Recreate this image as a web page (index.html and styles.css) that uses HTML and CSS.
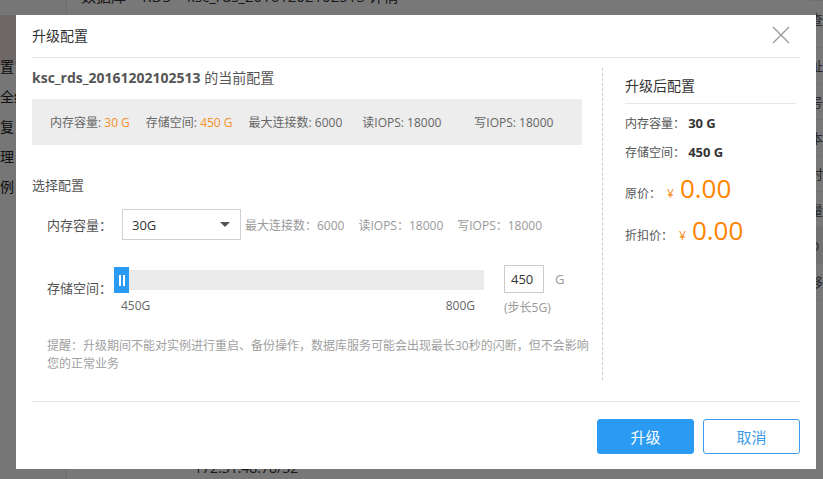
FILE: index.html
```html
<!DOCTYPE html>
<html lang="zh-CN">
<head>
  <meta charset="UTF-8" />
  <meta name="viewport" content="width=device-width, initial-scale=1.0"/>
  <title>升级配置</title>
  <link rel="stylesheet" href="styles.css">
</head>
<body>

  <!-- page behind the dialog -->
  <div class="page">
    <aside class="sidebar">
      <div class="side-head"></div>
      <ul class="side-menu">
        <li>置</li>
        <li>全终</li>
        <li>复</li>
        <li>理</li>
        <li>例</li>
      </ul>
    </aside>
    <main class="main">
      <div class="crumb">数据库 &gt; RDS &gt; ksc_rds_20161202102513 详情</div>
      <div class="content">
        <div class="content-left">
          <div class="ip">172.31.48.78/32</div>
        </div>
        <ul class="content-right">
          <li class="line">查</li>
          <li>址</li>
          <li>号</li>
          <li>本</li>
          <li>时</li>
          <li>量</li>
          <li class="band">D</li>
          <li>移</li>
        </ul>
      </div>
    </main>
  </div>

  <div class="mask"></div>

  <!-- upgrade dialog -->
  <div class="modal">
    <div class="modal-header">
      <span class="modal-title">升级配置</span>
      <svg class="close" width="18" height="18" viewBox="0 0 18 18">
        <path d="M1 1 L17 17 M17 1 L1 17" stroke="#9a9a9a" stroke-width="1.3" fill="none"/>
      </svg>
    </div>

    <div class="modal-body">
      <div class="col-left">
        <div class="cur-title"><b>ksc_rds_20161202102513</b> 的当前配置</div>
        <div class="cur-box">
          <span class="cur-item">内存容量: <em>30 G</em></span>
          <span class="cur-item">存储空间: <em>450 G</em></span>
          <span class="cur-item conn">最大连接数: 6000</span>
          <span class="cur-item wide">读IOPS: 18000</span>
          <span class="cur-item">写IOPS: 18000</span>
        </div>

        <div class="sub-title">选择配置</div>

        <div class="form-row">
          <label class="label mem-label">内存容量：</label>
          <div class="select">
            <span>30G</span>
            <span class="caret"></span>
          </div>
          <span class="spec">最大连接数：6000</span>
          <span class="spec">读IOPS：18000</span>
          <span class="spec">写IOPS：18000</span>
        </div>

        <div class="form-row disk-row">
          <label class="label disk-label">存储空间：</label>
          <div class="slider-wrap">
            <div class="slider">
              <div class="handle"><i></i><i></i></div>
            </div>
            <div class="scale">
              <span>450G</span>
              <span>800G</span>
            </div>
          </div>
          <div class="size-wrap">
            <div class="size-input">
              <input type="text" value="450">
              <span class="unit">G</span>
            </div>
            <div class="step">(步长5G)</div>
          </div>
        </div>

        <p class="notice">提醒：升级期间不能对实例进行重启、备份操作，数据库服务可能会出现最长30秒的闪断，但不会影响您的正常业务</p>
      </div>

      <div class="col-right">
        <div class="after-title">升级后配置</div>
        <div class="after-row">内存容量： <b>30 G</b></div>
        <div class="after-row">存储空间： <b>450 G</b></div>
        <div class="price-row">原价：<span class="yen">¥</span><span class="price">0.00</span></div>
        <div class="price-row discount">折扣价：<span class="yen">¥</span><span class="price">0.00</span></div>
      </div>
    </div>

    <div class="modal-footer">
      <button class="btn btn-primary">升级</button>
      <button class="btn btn-default">取消</button>
    </div>
  </div>

</body>
</html>
```

FILE: styles.css
```css
* {
  box-sizing: border-box;
}
body {
  margin: 0;
  width: 823px;
  height: 479px;
  overflow: hidden;
  font-family: 'Open Sans', 'Noto Sans CJK SC', sans-serif;
  color: #555;
  background: #fff;
}
ul {
  list-style: none;
  margin: 0;
  padding: 0;
}

/* background page */
.page {
  display: flex;
  height: 479px;
}
.sidebar {
  width: 73px;
  background: #fafafa;
  border-right: 1px solid #e8e8e8;
}
.side-head {
  height: 50px;
  margin-top: 15px;
  background: #e9dcdc;
}
.side-menu li {
  height: 30px;
  line-height: 30px;
  font-size: 14px;
  color: #222;
}
.side-menu li:first-child {
  margin-top: -13px;
}
.main {
  flex: 1;
  background: #fff;
}
.crumb {
  margin: -14px 0 0 14px;
  height: 29px;
  line-height: 20px;
  font-size: 15px;
  color: #333;
}
.content {
  display: flex;
}
.content-left {
  width: 743px;
  height: 455px;
  display: flex;
  align-items: flex-end;
}
.ip {
  margin: 0 0 -7px 127px;
  font-size: 14px;
  color: #333;
}
.content-right {
  flex: 1;
  margin-top: -15px;
}
.content-right li {
  height: 36px;
  line-height: 36px;
  font-size: 13px;
  color: #555;
  border-bottom: 1px solid #f0f0f0;
}
.content-right li.line {
  height: 48px;
  border-top: 1px solid #eee;
}
.content-right li.band {
  background: #f1f1f1;
}

.mask {
  position: fixed;
  top: 0; left: 0; right: 0; bottom: 0;
  background: rgba(0,0,0,0.53);
}

/* dialog */
.modal {
  position: fixed;
  left: 16px;
  top: 15px;
  width: 800px;
  height: 454px;
  background: #fff;
  padding: 0 16px;
}
.modal-header {
  height: 43px;
  border-bottom: 1px solid #e8e8e8;
  display: flex;
  align-items: center;
  justify-content: space-between;
}
.modal-title {
  font-size: 14px;
  color: #333;
  margin-top: -2px;
}
.close {
  margin: -2px 10px 0 0;
}
.modal-body {
  display: flex;
  height: 344px;
  border-bottom: 1px solid #e8e8e8;
}
.col-left {
  width: 550px;
  padding-top: 10px;
}
.cur-title {
  font-size: 14px;
  line-height: 20px;
  color: #555;
}
.cur-title b {
  font-weight: 700;
  color: #555;
}
.cur-box {
  margin-top: 11px;
  height: 46px;
  background: #ededed;
  display: flex;
  align-items: center;
  padding-left: 18px;
  font-size: 12px;
  color: #666;
}
.cur-item {
  margin-right: 16px;
}
.cur-item.conn {
  margin-right: 20px;
}
.cur-item.wide {
  margin-right: 33px;
}
.cur-item em {
  font-style: normal;
  color: #f7902b;
}
.sub-title {
  margin-top: 30px;
  font-size: 13px;
  line-height: 20px;
  color: #555;
}
.form-row {
  display: flex;
  align-items: center;
  margin-top: 14px;
  padding-left: 15px;
}
.label {
  font-size: 13px;
  color: #555;
}
.mem-label {
  width: 75px;
}
.select {
  width: 119px;
  height: 31px;
  border: 1px solid #d0d0d0;
  display: flex;
  align-items: center;
  justify-content: space-between;
  padding: 0 10px 0 9px;
  font-size: 13px;
  color: #333;
  margin-right: 4px;
}
.caret {
  width: 0;
  height: 0;
  border-left: 5px solid transparent;
  border-right: 5px solid transparent;
  border-top: 5px solid #555;
}
.spec {
  font-size: 12px;
  color: #999;
  margin-right: 14px;
}
.disk-row {
  margin-top: 25px;
  align-items: flex-start;
}
.disk-label {
  width: 67px;
  margin-top: 13px;
  line-height: 20px;
}
.slider-wrap {
  width: 370px;
  padding-top: 5px;
}
.slider {
  position: relative;
  height: 20px;
  background: #ebebeb;
}
.handle {
  position: absolute;
  left: 0;
  top: -3px;
  width: 15px;
  height: 26px;
  background: #2b9af3;
  display: flex;
  align-items: center;
  justify-content: center;
  gap: 2px;
}
.handle i {
  width: 2px;
  height: 11px;
  background: #fff;
}
.scale {
  display: flex;
  justify-content: space-between;
  padding: 0 9px 0 7px;
  margin-top: 8px;
  font-size: 12px;
  line-height: 16px;
  color: #666;
}
.size-wrap {
  margin-left: 20px;
}
.size-input {
  display: flex;
  align-items: center;
}
.size-input input {
  width: 40px;
  height: 28px;
  border: 1px solid #ccc;
  padding: 0 6px;
  font-family: inherit;
  font-size: 13px;
  color: #333;
  outline: none;
}
.unit {
  margin-left: 11px;
  font-size: 13px;
  color: #999;
}
.step {
  margin-top: 7px;
  font-size: 12px;
  line-height: 16px;
  color: #999;
}
.notice {
  margin: 21px 0 0 15px;
  width: 545px;
  font-size: 12px;
  line-height: 18px;
  color: #a0a0a0;
}

.col-right {
  flex: 1;
  margin: 10px 0 0 20px;
  height: 312px;
  border-left: 1px dashed #ccc;
  padding: 8px 4px 0 22px;
}
.after-title {
  font-size: 14px;
  line-height: 20px;
  color: #333;
  padding-bottom: 7px;
  border-bottom: 1px solid #e6e6e6;
}
.after-row {
  margin-top: 9px;
  font-size: 12px;
  line-height: 20px;
  color: #555;
}
.after-row + .after-row {
  margin-top: 8px;
}
.after-row b {
  font-size: 13px;
  color: #333;
}
.price-row {
  margin-top: 9px;
  font-size: 12px;
  line-height: 32px;
  color: #555;
}
.price-row.discount {
  margin-top: 4px;
}
.yen {
  margin: 0 6px 0 6px;
  color: #f7902b;
}
.price {
  font-size: 26px;
  color: #ff8400;
}

.modal-footer {
  display: flex;
  justify-content: flex-end;
  gap: 9px;
  padding-top: 17px;
}
.btn {
  width: 97px;
  height: 35px;
  border-radius: 3px;
  font-family: inherit;
  font-size: 15px;
  cursor: pointer;
}
.btn-primary {
  background: #2b9af3;
  border: 1px solid #2b9af3;
  color: #fff;
}
.btn-default {
  background: #fff;
  border: 1px solid #3d9be9;
  color: #3d9be9;
}
```
